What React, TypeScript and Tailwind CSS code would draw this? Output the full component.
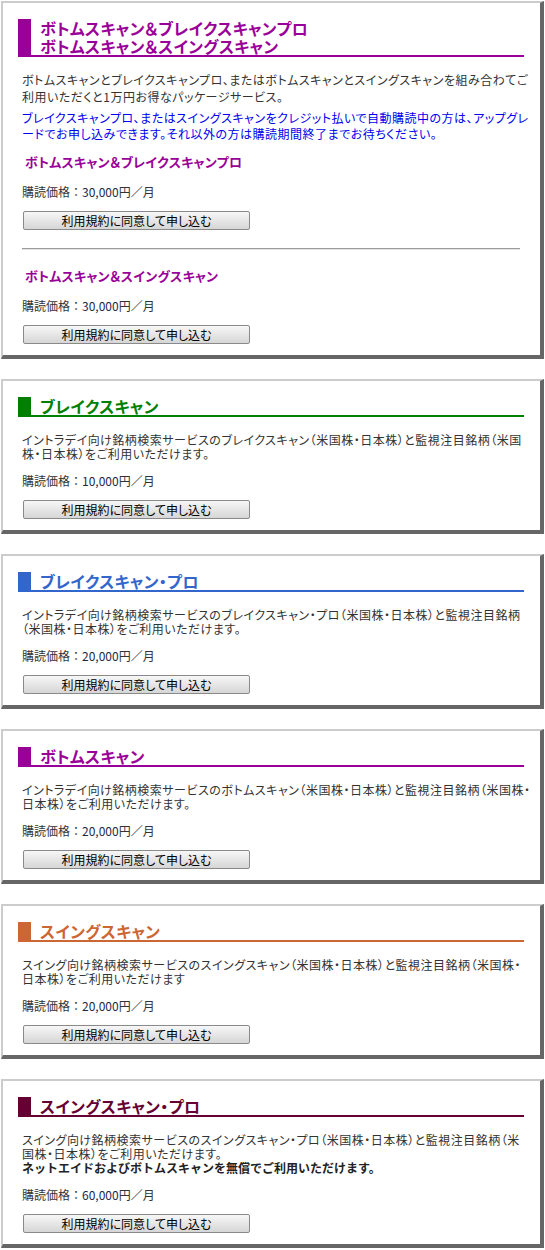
import React from 'react';

interface Plan {
  title: string;
  color: string;
  lines: string[];
  bold?: string;
  price: string;
}

const plans: Plan[] = [
  {
    title: 'ブレイクスキャン',
    color: 'border-[#008000] text-[#008000]',
    lines: [
      'イントラデイ向け銘柄検索サービスのブレイクスキャン（米国株・日本株）と監視注目銘柄（米国',
      '株・日本株）をご利用いただけます。',
    ],
    price: '10,000',
  },
  {
    title: 'ブレイクスキャン・プロ',
    color: 'border-[#3366cc] text-[#3366cc]',
    lines: [
      'イントラデイ向け銘柄検索サービスのブレイクスキャン・プロ（米国株・日本株）と監視注目銘柄',
      '（米国株・日本株）をご利用いただけます。',
    ],
    price: '20,000',
  },
  {
    title: 'ボトムスキャン',
    color: 'border-[#990099] text-[#990099]',
    lines: [
      'イントラデイ向け銘柄検索サービスのボトムスキャン（米国株・日本株）と監視注目銘柄（米国株・',
      '日本株）をご利用いただけます。',
    ],
    price: '20,000',
  },
  {
    title: 'スイングスキャン',
    color: 'border-[#cc6633] text-[#cc6633]',
    lines: [
      'スイング向け銘柄検索サービスのスイングスキャン（米国株・日本株）と監視注目銘柄（米国株・',
      '日本株）をご利用いただけます',
    ],
    price: '20,000',
  },
  {
    title: 'スイングスキャン・プロ',
    color: 'border-[#660033] text-[#660033]',
    lines: [
      'スイング向け銘柄検索サービスのスイングスキャン・プロ（米国株・日本株）と監視注目銘柄（米',
      '国株・日本株）をご利用いただけます。',
    ],
    bold: 'ネットエイドおよびボトムスキャンを無償でご利用いただけます。',
    price: '60,000',
  },
];

function Card({ children }: { children: React.ReactNode }) {
  return (
    <section className="mx-px mb-5 border-t-2 border-l-2 border-r-4 border-b-4 border-t-[#cccccc] border-l-[#cccccc] border-r-[#666666] border-b-[#666666] bg-white pt-4 pl-[15px] pr-4 pb-[11px]">
      {children}
    </section>
  );
}

function Header({ color, children }: { color: string; children: React.ReactNode }) {
  return (
    <h2 className={`border-l-[13px] border-b-2 pl-[9px] text-[16px] leading-[18px] font-bold tracking-[0.4px] ${color}`}>
      {children}
    </h2>
  );
}

function Price({ value }: { value: string }) {
  return (
    <p className="text-[12px] leading-[14px] tracking-normal text-[#333] [font-feature-settings:normal]">
      購読価格：<span className="text-[#1a2a4a]">{value}</span>円／月
    </p>
  );
}

function ApplyButton() {
  return (
    <button className="ml-px mt-3 flex h-[19px] w-[227px] items-center justify-center rounded-[2px] border border-[#8a8a8a] bg-gradient-to-b from-[#f7f7f7] to-[#d6d6d6] text-[12px] leading-none tracking-normal text-black">
      利用規約に同意して申し込む
    </button>
  );
}

export default function App() {
  return (
    <div className="min-h-[1250px] bg-white pt-px font-['Noto_Sans_CJK_JP',sans-serif] [font-feature-settings:'palt']">
      <Card>
        <Header color="border-[#990099] text-[#990099]">
          ボトムスキャン＆ブレイクスキャンプロ
          <br />
          ボトムスキャン＆スイングスキャン
        </Header>
        <div className="-mr-3 px-1 tracking-[0.5px]">
          <p className="mt-[14px] whitespace-nowrap text-[12px] leading-[17px] text-[#333]">
            ボトムスキャンとブレイクスキャンプロ、またはボトムスキャンとスイングスキャンを組み合わてご
            <br />
            利用いただくと1万円お得なパッケージサービス。
          </p>
          <p className="mt-[5px] whitespace-nowrap text-[12px] leading-[16px] text-[#0000ee]">
            ブレイクスキャンプロ、またはスイングスキャンをクレジット払いで自動購読中の方は、アップグレ
            <br />
            ードでお申し込みできます。それ以外の方は購読期間終了までお待ちください。
          </p>
          <h3 className="ml-[3px] mt-3 text-[13px] leading-[16px] font-bold tracking-[0.3px] text-[#990099]">
            ボトムスキャン＆ブレイクスキャンプロ
          </h3>
          <div className="mt-[15px]">
            <Price value="30,000" />
          </div>
          <ApplyButton />
          <div className="mt-[18px] h-[2px] w-[498px] border-t border-b border-t-[#9a9a9a] border-b-[#e4e4e4]" />
          <h3 className="ml-[3px] mt-[18px] text-[13px] leading-[16px] font-bold tracking-[0.3px] text-[#990099]">
            ボトムスキャン＆スイングスキャン
          </h3>
          <div className="mt-[15px]">
            <Price value="30,000" />
          </div>
          <ApplyButton />
        </div>
      </Card>

      {plans.map((plan) => (
        <Card key={plan.title}>
          <Header color={plan.color}>{plan.title}</Header>
          <div className="-mr-3 px-1 tracking-[0.5px]">
            <p className="mt-4 whitespace-nowrap text-[12px] leading-[14px] text-[#333]">
              {plan.lines[0]}
              <br />
              {plan.lines[1]}
              {plan.bold && (
                <>
                  <br />
                  <b className="tracking-normal text-[#222] [font-feature-settings:normal]">{plan.bold}</b>
                </>
              )}
            </p>
            <div className="mt-[13px]">
              <Price value={plan.price} />
            </div>
            <ApplyButton />
          </div>
        </Card>
      ))}
    </div>
  );
}
